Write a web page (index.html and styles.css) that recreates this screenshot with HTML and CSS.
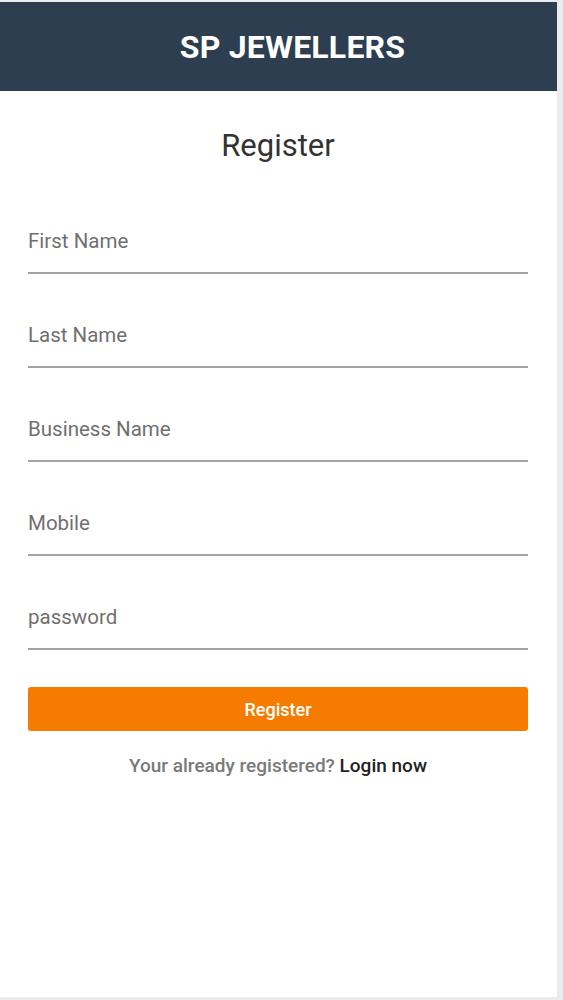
FILE: index.html
```html
<!DOCTYPE html>
<html lang="en">
  <head>
    <meta charset="UTF-8" />
    <meta name="viewport" content="width=device-width, initial-scale=1.0" />
    <title>SP Jewellers - Register</title>
    <link rel="stylesheet" href="styles.css">
  </head>
  <body>
    <div class="app">
      <header class="topbar">
        <span class="brand">SP JEWELLERS</span>
      </header>

      <main class="register">
        <h1>Register</h1>

        <form class="register-form" onsubmit="return false">
          <div class="field">
            <input type="text" placeholder="First Name" />
          </div>
          <div class="field">
            <input type="text" placeholder="Last Name" />
          </div>
          <div class="field">
            <input type="text" placeholder="Business Name" />
          </div>
          <div class="field">
            <input type="tel" placeholder="Mobile" />
          </div>
          <div class="field">
            <input type="password" placeholder="password" />
          </div>

          <button type="submit" class="register-button">Register</button>

          <p class="login-hint">
            Your already registered? <a href="#">Login now</a>
          </p>
        </form>
      </main>
    </div>
  </body>
</html>
```

FILE: styles.css
```css
body {
  font-family: Roboto, "Noto Sans", Arial, sans-serif;
  margin: 0;
  padding: 0;
  background: #ececec;
}

.app {
  width: 557px;
  height: 995px;
  margin-top: 2px;
  background: #fff;
}

.topbar {
  height: 89px;
  background: #2c3e50;
  display: flex;
  align-items: center;
  justify-content: center;
  padding-left: 28px;
}

.brand {
  color: #fff;
  font-size: 32px;
  font-weight: 700;
  letter-spacing: 0.2px;
}

.register {
  padding: 35px 29px 0 28px;
}

h1 {
  margin: 0 0 63px;
  text-align: center;
  font-size: 31px;
  line-height: 40px;
  font-weight: 400;
  color: #333;
}

.field {
  margin-top: 49px;
}

.field input {
  display: block;
  width: 100%;
  box-sizing: border-box;
  border: none;
  border-bottom: 2px solid #a3a3a3;
  padding: 0 0 19px;
  font-family: inherit;
  font-size: 20.5px;
  line-height: 24px;
  color: #333;
  background: transparent;
  outline: none;
}

.field input::placeholder {
  color: #707070;
}

.register-button {
  display: block;
  width: 100%;
  height: 44px;
  margin-top: 37px;
  border: none;
  border-radius: 3px;
  background: #f57c00;
  color: #fff;
  font-family: inherit;
  font-size: 18px;
  font-weight: 500;
  cursor: pointer;
}

.login-hint {
  margin: 23px 0 0;
  text-align: center;
  font-size: 19px;
  line-height: 24px;
  font-weight: 500;
  color: #7a7a7a;
}

.login-hint a {
  color: #222;
  text-decoration: none;
}
```
